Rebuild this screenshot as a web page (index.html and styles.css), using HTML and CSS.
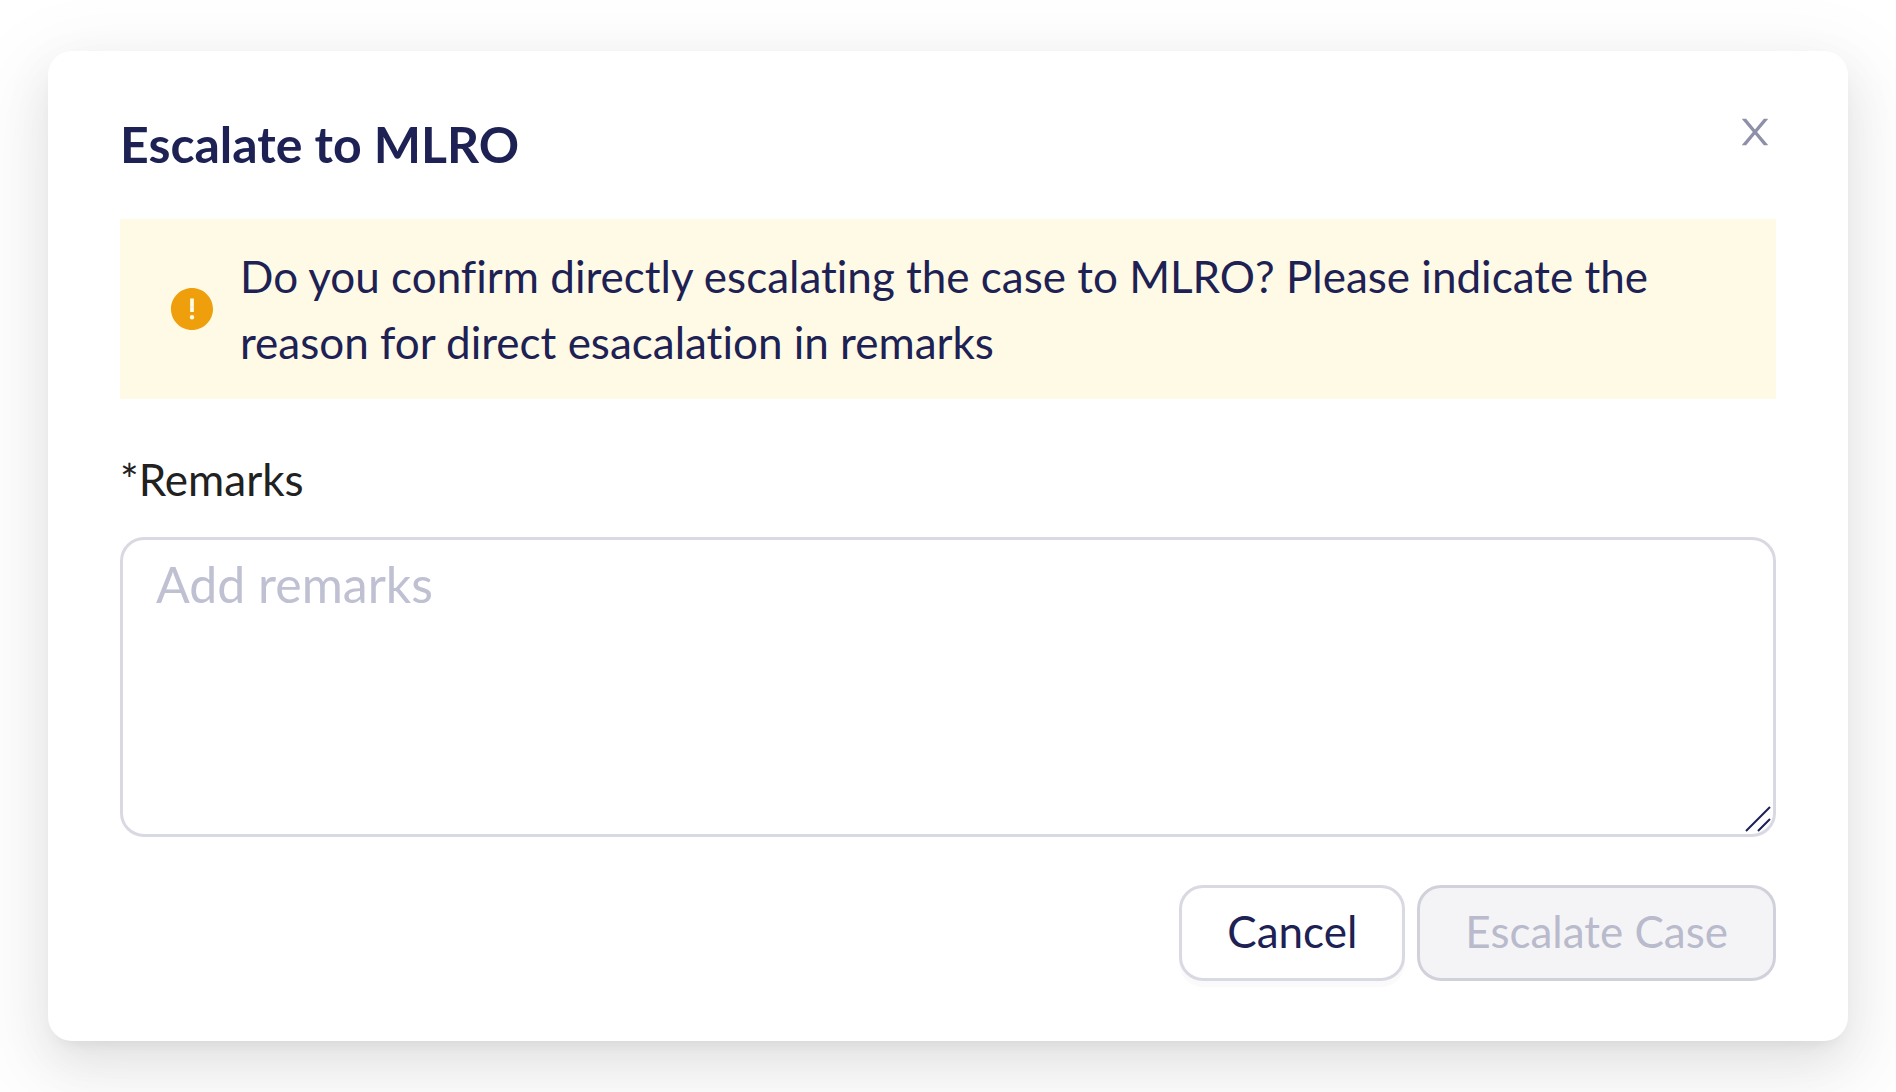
FILE: index.html
```html
<!DOCTYPE html>
<html lang="en">
<head>
  <meta charset="utf-8">
  <title>Escalate to MLRO</title>
  <link rel="stylesheet" href="styles.css">
</head>
<body>
  <main class="modal" role="dialog" aria-labelledby="modal-title">
    <header class="modal-header">
      <h1 class="modal-title" id="modal-title">Escalate to MLRO</h1>
      <button class="close" type="button" aria-label="Close">
        <svg class="icon" viewBox="0 0 1024 1024" aria-hidden="true"><path d="M563.8 512l262.5-312.9c4.4-5.2.7-13.1-6.1-13.1h-79.8c-4.7 0-9.2 2.1-12.3 5.7L511.6 449.8 295.1 191.7c-3-3.6-7.5-5.7-12.3-5.7H203c-6.8 0-10.5 7.9-6.1 13.1L459.4 512 196.9 824.9A7.95 7.95 0 00203 838h79.8c4.7 0 9.2-2.1 12.3-5.7l216.5-258.1 216.5 258.1c3 3.6 7.5 5.7 12.3 5.7h79.8c6.8 0 10.5-7.9 6.1-13.1L563.8 512z"/></svg>
      </button>
    </header>

    <div class="alert" role="alert">
      <svg class="icon alert-icon" viewBox="64 64 896 896" aria-hidden="true"><path d="M512 64C264.6 64 64 264.6 64 512s200.6 448 448 448 448-200.6 448-448S759.4 64 512 64zm-40 232c0-4.400 3.600-8 8-8h64c4.400 0 8 3.600 8 8v272c0 4.400-3.600 8-8 8h-64c-4.400 0-8-3.600-8-8V296zm40 440a48 48 0 010-96 48 48 0 010 96z"/></svg>
      <p class="alert-text">Do you confirm directly escalating the case to MLRO? Please indicate the reason for direct esacalation in remarks</p>
    </div>

    <form class="form">
      <label class="label" for="remarks">*Remarks</label>
      <div class="field">
        <textarea class="textarea" id="remarks" placeholder="Add remarks" required></textarea>
        <svg class="grip" viewBox="0 0 26 26" aria-hidden="true"><path d="M1 25L25 1M13 25L25 13"/></svg>
      </div>
      <footer class="actions">
        <button class="button" type="button">Cancel</button>
        <button class="button" type="submit" disabled>Escalate Case</button>
      </footer>
    </form>
  </main>
</body>
</html>
```
FILE: styles.css
```css
* {
  box-sizing: border-box;
}

body {
  margin: 0;
  padding: 51px 48px;
  background: #fff;
  color: #1d2153;
  font: 44px/66px Lato, "Open Sans", sans-serif;
  font-variant-ligatures: none;
}

.modal {
  padding: 60px 72px;
  border-radius: 24px;
  background: #fff;
  box-shadow:
    0 18px 48px rgba(0, 0, 0, 0.08),
    0 9px 18px -12px rgba(0, 0, 0, 0.12),
    0 27px 84px 24px rgba(0, 0, 0, 0.05);
}

.modal-header {
  display: flex;
  justify-content: space-between;
  align-items: flex-start;
  margin-bottom: 42px;
}

.modal-title {
  margin: 0;
  font-size: 50px;
  font-weight: 700;
  line-height: 66px;
}

.icon {
  display: block;
  flex: none;
  width: 42px;
  height: 42px;
  fill: currentColor;
}

.close {
  padding: 0;
  border: 0;
  background: none;
  color: #8e90a9;
  cursor: pointer;
}

.alert {
  display: flex;
  align-items: center;
  gap: 27px;
  padding: 24px 51px;
  background: #fffae6;
}

.alert-icon {
  color: #f09f0c;
}

.alert-text {
  margin: 0;
}

.label {
  display: block;
  margin: 47px 0 25px;
  color: #212121;
}

.field {
  position: relative;
}

.textarea {
  display: block;
  width: 100%;
  height: 300px;
  padding: 8px 33px;
  border: 3px solid #d9d9e3;
  border-radius: 24px;
  background: #fff;
  color: inherit;
  font: inherit;
  font-size: 50px;
  line-height: 72px;
  resize: vertical;
}

.textarea::placeholder {
  color: #bfc0d2;
  opacity: 1;
}

.textarea::-webkit-resizer {
  background: transparent;
}

/* Resize grip drawn over the corner of the text area */
.grip {
  position: absolute;
  right: 5px;
  bottom: 5px;
  width: 26px;
  height: 26px;
  fill: none;
  stroke: #1d2153;
  stroke-width: 2;
  pointer-events: none;
}

.actions {
  display: flex;
  justify-content: flex-end;
  gap: 12px;
  margin-top: 48px;
}

.button {
  height: 96px;
  padding: 0 45px 4px;
  border: 3px solid #d9d9e3;
  border-radius: 24px;
  background: #fff;
  box-shadow: 0 6px 0 rgba(0, 0, 0, 0.02);
  color: inherit;
  font: inherit;
  cursor: pointer;
}

.button:disabled {
  border-color: #d1d1dc;
  background: #f4f4f7;
  box-shadow: none;
  color: #b9bacb;
  cursor: not-allowed;
}
```
